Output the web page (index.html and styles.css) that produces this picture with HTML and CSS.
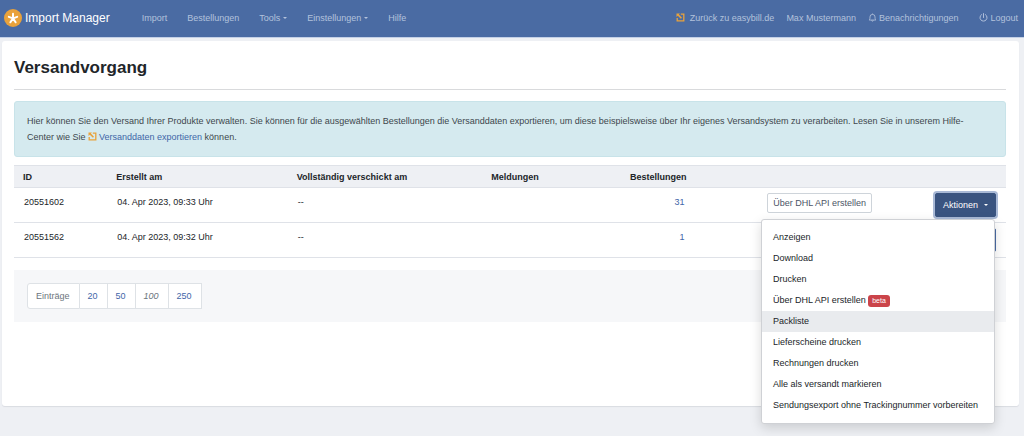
FILE: index.html
```html
<!DOCTYPE html>
<html lang="de">
<head>
<meta charset="utf-8">
<meta name="viewport" content="width=device-width, initial-scale=1">
<title>Import Manager</title>
<link rel="stylesheet" href="styles.css">
</head>
<body>
<header class="navbar">
  <a class="brand" href="#">
    <svg class="brand-logo" viewBox="0 0 18 18" aria-hidden="true"><circle cx="9" cy="9" r="9" fill="#e9a23b"/><path d="M9 9.400V4.800M9 9.400L4.800 7.900M9 9.400L13.200 7.900M9 9.400L6.400 13.300M9 9.400L11.600 13.300" stroke="#fff" stroke-width="2" stroke-linecap="round"/></svg>
    <span>Import Manager</span>
  </a>
  <nav class="nav-main">
    <a href="#">Import</a>
    <a href="#">Bestellungen</a>
    <a class="caret" href="#">Tools</a>
    <a class="caret" href="#">Einstellungen</a>
    <a href="#">Hilfe</a>
  </nav>
  <nav class="nav-user">
    <a class="nav-back" href="#"><svg class="icon-ext" viewBox="0 0 9 9" aria-hidden="true"><path d="M4.800 1.200H7.800V7.800H1.200V5" fill="none" stroke="#e9a23b" stroke-width="1.300"/><path d="M0.500 0.500H4L2.900 1.600L6 4.700L4.900 5.800L1.800 2.700L0.500 4Z" fill="#e9a23b"/></svg>Zurück zu easybill.de</a>
    <a href="#">Max Mustermann</a>
    <a class="nav-bell" href="#"><svg class="icon" viewBox="0 0 16 16" aria-hidden="true"><path d="M8 1V2.500M2 12.500H14C12.500 11 12.500 9.500 12.500 7A4.500 4.500 0 0 0 3.500 7C3.500 9.500 3.500 11 2 12.500ZM6.500 13A1.500 1.500 0 0 0 9.500 13" fill="none" stroke="currentColor" stroke-width="1.500" stroke-linejoin="round"/></svg>Benachrichtigungen</a>
    <a href="#"><svg class="icon" viewBox="0 0 16 16" aria-hidden="true"><path d="M8 1V8M4.500 2.800A6.300 6.300 0 1 0 11.500 2.800" fill="none" stroke="currentColor" stroke-width="1.700" stroke-linecap="round"/></svg>Logout</a>
  </nav>
</header>

<main class="card">
  <h1 class="title">Versandvorgang</h1>
  <p class="info">Hier können Sie den Versand Ihrer Produkte verwalten. Sie können für die ausgewählten Bestellungen die Versanddaten exportieren, um diese beispielsweise über Ihr eigenes Versandsystem zu verarbeiten. Lesen Sie in unserem Hilfe-Center wie Sie <a href="#"><svg class="icon-ext" viewBox="0 0 9 9" aria-hidden="true"><path d="M4.800 1.200H7.800V7.800H1.200V5" fill="none" stroke="#e9a23b" stroke-width="1.300"/><path d="M0.500 0.500H4L2.900 1.600L6 4.700L4.900 5.800L1.800 2.700L0.500 4Z" fill="#e9a23b"/></svg>Versanddaten exportieren</a> können.</p>

  <table class="orders">
    <colgroup><col class="c-id"><col class="c-date"><col class="c-sent"><col class="c-msg"><col class="c-count"><col class="c-dhl"><col></colgroup>
    <thead>
      <tr><th>ID</th><th>Erstellt am</th><th>Vollständig verschickt am</th><th>Meldungen</th><th class="num">Bestellungen</th><th></th><th></th></tr>
    </thead>
    <tbody>
      <tr>
        <td>20551602</td><td>04. Apr 2023, 09:33 Uhr</td><td>--</td><td></td>
        <td class="num"><a href="#">31</a></td>
        <td class="right"><button class="btn-outline" type="button">Über DHL API erstellen</button></td>
        <td class="right">
          <div class="dropdown">
            <button class="btn-action is-open caret" type="button" aria-haspopup="true" aria-expanded="true">Aktionen</button>
            <div class="menu">
              <a href="#">Anzeigen</a>
              <a href="#">Download</a>
              <a href="#">Drucken</a>
              <a href="#">Über DHL API erstellen <span class="badge">beta</span></a>
              <a class="is-hover" href="#">Packliste</a>
              <a href="#">Lieferscheine drucken</a>
              <a href="#">Rechnungen drucken</a>
              <a href="#">Alle als versandt markieren</a>
              <a href="#">Sendungsexport ohne Trackingnummer vorbereiten</a>
            </div>
          </div>
        </td>
      </tr>
      <tr>
        <td>20551562</td><td>04. Apr 2023, 09:32 Uhr</td><td>--</td><td></td>
        <td class="num"><a href="#">1</a></td>
        <td></td>
        <td class="right"><button class="btn-action caret" type="button" aria-haspopup="true">Aktionen</button></td>
      </tr>
    </tbody>
  </table>

  <div class="table-foot">
    <div class="pages">
      <span>Einträge</span>
      <a href="#">20</a>
      <a href="#">50</a>
      <em>100</em>
      <a href="#">250</a>
    </div>
  </div>
</main>
</body>
</html>
```
FILE: styles.css
```css
* { box-sizing: border-box; }

body {
  min-height: 100vh;
  margin: 0;
  background: #eef0f4;
  color: #212529;
  font: 9px/16px "Liberation Sans", Arial, sans-serif;
}

a { color: #3f66a8; text-decoration: none; }

button { font: inherit; cursor: pointer; }

.navbar {
  display: flex;
  align-items: center;
  height: 38px;
  padding: 0 6px 2px 4px;
  background: #4a6ba3;
  border-bottom: 1px solid #c3d0e6;
}

.navbar a { color: #b3c2dc; white-space: nowrap; }

.navbar .brand {
  display: flex;
  align-items: center;
  gap: 3px;
  color: #fff;
  font-size: 12px;
}

.brand-logo { width: 18px; height: 18px; }

.nav-main { display: flex; gap: 20px; margin-left: 32px; }

.nav-user { display: flex; margin-left: auto; gap: 12px; }

.nav-bell { margin-right: 9px; }

.nav-back .icon-ext { margin-right: 5px; }

.icon,
.icon-ext { width: 9px; height: 9px; margin-right: 2px; vertical-align: -1px; }

.caret::after {
  content: "";
  display: inline-block;
  margin-left: 3px;
  vertical-align: 2px;
  border: 2px solid transparent;
  border-top-color: currentColor;
  border-bottom: 0;
}

.card {
  margin: 3px 5px 0 2px;
  padding: 15px 13px 84px 12px;
  background: #fff;
  border-radius: 3px;
  box-shadow: 0 1px 1px #d9dce2;
}

.title {
  margin: 0 0 11px;
  padding-bottom: 10px;
  border-bottom: 1px solid #d9dadc;
  font-size: 17px;
  line-height: 23px;
}

.info {
  margin: 0 0 8px;
  padding: 11px 20px 11px 12px;
  background: #d5eaef;
  border: 1px solid #c8e3e9;
  border-radius: 3px;
  color: #40474d;
}

.orders {
  width: 100%;
  table-layout: fixed;
  border-collapse: collapse;
}

.c-id { width: 9.4%; }
.c-date { width: 18.2%; }
.c-sent { width: 19.6%; }
.c-msg { width: 14%; }
.c-count { width: 7.5%; }
.c-dhl { width: 18.8%; }

.orders th {
  height: 22px;
  padding: 0 9px;
  background: #eef0f4;
  border: solid #dfe2e8;
  border-width: 1px 0;
  line-height: 20px;
  text-align: left;
  white-space: nowrap;
}

.orders td {
  height: 35px;
  padding: 6px 10px;
  border-bottom: 1px solid #dfe2e8;
  vertical-align: top;
}

.orders .num { text-align: right; }
.orders td.num { padding-right: 11px; }
.orders td.right { padding: 5px 10px; text-align: right; }

.btn-outline {
  padding: 1px 5px;
  background: #fff;
  border: 1px solid #ced4da;
  border-radius: 2px;
  color: #4c5566;
  line-height: 16px;
  white-space: nowrap;
}

.btn-action {
  padding: 3px 7px;
  background: #4a6ba3;
  border: 1px solid #4a6ba3;
  border-radius: 2px;
  color: #fff;
  line-height: 16px;
}

.btn-action.caret::after { margin-left: 6px; }

.btn-action.is-open {
  background: #3a5480;
  border-color: #3a5480;
  box-shadow: 0 0 0 2px #a9b9d6;
}

.dropdown { position: relative; display: inline-block; }

.menu {
  position: absolute;
  top: 100%;
  right: 1px;
  z-index: 1;
  min-width: 234px;
  margin-top: 2px;
  padding: 7px 0;
  background: #fff;
  border: 1px solid #cfd1d5;
  border-radius: 3px;
  box-shadow: 0 4px 12px rgba(0, 0, 0, 0.15);
  text-align: left;
}

.menu a {
  display: block;
  padding: 0 11px;
  color: #212529;
  line-height: 21px;
  white-space: nowrap;
}

.menu .is-hover { background: #e9ebee; }

.badge {
  display: inline-block;
  padding: 0 4px;
  background: #cb444a;
  border-radius: 3px;
  color: #fff;
  font-size: 7px;
  line-height: 12px;
}

.table-foot {
  margin-top: 12px;
  padding: 13px;
  background: #f6f7f9;
}

.pages { display: flex; }

.pages > * {
  padding: 4px 9px 4px 8px;
  background: #fff;
  border: 1px solid #dee2e6;
  border-left-width: 0;
  color: #6c757d;
}

.pages > a { color: #3f66a8; }

.pages > :first-child { border-left-width: 1px; border-radius: 3px 0 0 3px; }
```
